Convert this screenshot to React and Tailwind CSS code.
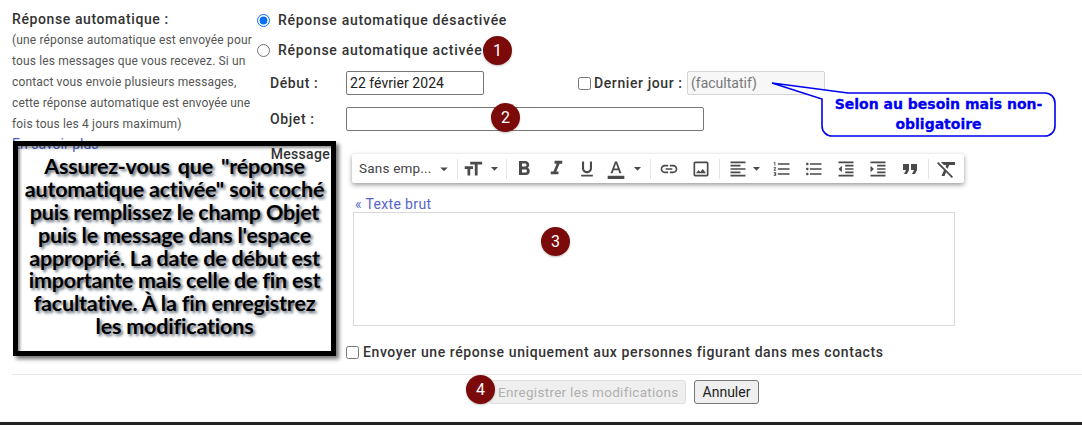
import React from "react";
import {
  MdFormatBold, MdFormatItalic, MdFormatUnderlined, MdFormatColorText, MdInsertLink, MdOutlineImage,
  MdFormatAlignLeft, MdFormatListNumbered, MdFormatListBulleted, MdFormatIndentDecrease, MdFormatIndentIncrease,
  MdFormatQuote, MdFormatClear, MdFormatSize, MdArrowDropDown,
} from "react-icons/md";

const Badge = ({ n, className }) => (
  <div className={`absolute w-[29px] h-[29px] rounded-full bg-[#7b0a0a] text-white text-[16px] flex items-center justify-center shadow-[0_1px_2px_rgba(0,0,0,0.25)] font-['Roboto',sans-serif] ${className}`}>
    {n}
  </div>
);

const Sep = ({ ml }) => <div className="w-px h-[20px] bg-[#e4e4e4] shrink-0" style={{ marginLeft: ml }} />;
const Ico = ({ I, w = 32, s = 20, ml = 0 }) => (
  <div className="flex items-center justify-center shrink-0" style={{ width: w, marginLeft: ml }}>
    <I size={s} color="#4a4a4a" className="shrink-0" />
  </div>
);

export default function App() {
  return (
    <div className="relative w-[1082px] h-[425px] overflow-hidden bg-white font-['Roboto',sans-serif] text-[#222]">
      <div className="flex items-start pt-[5px]">
        <div className="w-[257px] shrink-0 pl-3 pt-[5px]">
          <div className="text-[14px] font-medium tracking-[0.6px] leading-[18px] text-[#333]">Réponse automatique :</div>
          <div className="text-[12px] leading-[21px] text-[#555] tracking-[0.15px] mt-[2px] whitespace-nowrap">
            <div>(une réponse automatique est envoyée pour</div>
            <div>tous les messages que vous recevez. Si un</div>
            <div>contact vous envoie plusieurs messages,</div>
            <div>cette réponse automatique est envoyée une</div>
            <div>fois tous les 4 jours maximum)</div>
          </div>
          <div className="text-[14px] leading-[18px] text-[#4a5fd0]">En savoir plus</div>
        </div>
        <div className="flex-1 min-w-0">
          <label className="flex items-center h-[30px] gap-[8px]">
            <input type="radio" name="r" defaultChecked className="m-0 accent-[#0b6ff5]" />
            <span className="text-[14px] font-medium tracking-[0.7px] text-[#333]">Réponse automatique désactivée</span>
          </label>
          <label className="flex items-center h-[30px] gap-[8px]">
            <input type="radio" name="r" className="m-0" />
            <span className="text-[14px] font-medium tracking-[0.7px] text-[#333]">Réponse automatique activée</span>
          </label>
          <div className="flex items-center h-[24px] mt-[6px] pl-[13px]">
            <div className="w-[76px] text-[14px] font-medium tracking-[0.6px] text-[#333]">Début :</div>
            <input readOnly value="22 février 2024" className="w-[138px] h-[24px] border border-[#767676] rounded-[2px] px-[3px] text-[14px] tracking-[0.05px] text-[#222] outline-none" />
            <input type="checkbox" className="m-0 ml-[94px]" />
            <div className="ml-[3px] w-[93px] text-[14px] font-medium tracking-[0.6px] text-[#333] whitespace-nowrap">Dernier jour :</div>
            <input readOnly value="(facultatif)" className="w-[138px] h-[24px] border border-[#d4d4d4] bg-[#f7f7f7] rounded-[2px] px-[3px] text-[14px] text-[#777] outline-none" />
          </div>
          <div className="flex items-center h-[24px] mt-[12px] pl-[13px]">
            <div className="w-[76px] text-[14px] font-medium tracking-[0.6px] text-[#333]">Objet :</div>
            <input readOnly className="w-[358px] h-[24px] border border-[#767676] rounded-[2px] outline-none" />
          </div>
          <div className="flex items-start mt-[23px]">
            <div className="relative z-10 w-[73px] -mt-[7px] text-right text-[14px] font-medium tracking-[0.3px] text-[#333] leading-[15px]">Message</div>
            <div className="flex flex-col ml-[22px]">
              <div className="flex items-center w-[612px] h-[29px] bg-white pl-[7px] rounded-[2px] shadow-[0_2px_5px_rgba(0,0,0,0.4)]">
                <span className="w-[76px] shrink-0 text-[13.5px] text-[#444] tracking-[0.2px] whitespace-nowrap">Sans emp...</span>
                <Ico I={MdArrowDropDown} w={18} s={18} />
                <Sep ml={4} />
                <Ico I={MdFormatSize} w={30} s={22} />
                <Ico I={MdArrowDropDown} w={12} s={17} />
                <Sep ml={6} />
                <Ico I={MdFormatBold} w={34} s={24} />
                <Ico I={MdFormatItalic} w={30} s={23} />
                <Ico I={MdFormatUnderlined} w={32} s={20} />
                <Ico I={MdFormatColorText} w={26} s={20} />
                <Ico I={MdArrowDropDown} w={16} s={17} />
                <Sep ml={5} />
                <Ico I={MdInsertLink} w={36} s={20} />
                <Ico I={MdOutlineImage} w={28} s={20} />
                <Sep ml={4} />
                <Ico I={MdFormatAlignLeft} w={36} s={20} />
                <Ico I={MdArrowDropDown} w={0} s={17} />
                <Ico I={MdFormatListNumbered} ml={10} />
                <Ico I={MdFormatListBulleted} />
                <Ico I={MdFormatIndentDecrease} />
                <Ico I={MdFormatIndentIncrease} />
                <Ico I={MdFormatQuote} s={24} />
                <Sep ml={2} />
                <Ico I={MdFormatClear} w={36} s={24} />
              </div>
              <div className="text-[14px] leading-[15px] mt-[14px] ml-[3px] tracking-[0.35px] text-[#5566cc]">« Texte brut</div>
              <div className="w-[602px] h-[114px] ml-[1px] border border-[#d9d9d9]" />
            </div>
          </div>
          <div className="flex items-center mt-[18px] ml-[89px] h-[16px]">
            <input type="checkbox" className="m-0" />
            <span className="ml-[4px] text-[14px] font-medium tracking-[0.6px] text-[#333] whitespace-nowrap">Envoyer une réponse uniquement aux personnes figurant dans mes contacts</span>
          </div>
        </div>
      </div>
      <div className="ml-3 mt-[14px] border-t border-[#e8e8e8] flex justify-start pt-[5px] gap-[8px] pl-[477px]">
        <button disabled className="w-[197px] h-[24px] bg-[#efefef] border border-[#dedede] rounded-[3px] text-[13.5px] text-[#b0b0b0] tracking-[0.3px] text-left pl-[8px] whitespace-nowrap">Enregistrer les modifications</button>
        <button className="w-[65px] h-[24px] bg-[#efefef] border border-[#767676] rounded-[3px] text-[14px] text-[#222]">Annuler</button>
      </div>

      <div className="absolute left-[13px] top-[141px] w-[323px] h-[215px] border-[5px] border-black shadow-[3px_3px_4px_rgba(0,0,0,0.55),inset_2px_2px_3px_rgba(0,0,0,0.45)] flex items-center justify-center">
        <div className="w-[313px] text-center font-['Lato',sans-serif] font-bold text-[#000] text-[21.5px] leading-[22.8px] tracking-[-0.2px] whitespace-nowrap [text-shadow:2px_2px_3px_#55606e] pb-[4px]">
          <span className="[word-spacing:3px]">Assurez-vous que "réponse</span><br />
          automatique activée" soit coché<br />
          puis remplissez le champ Objet<br />
          puis le message dans l'espace<br />
          approprié. La date de début est<br />
          importante mais celle de fin est<br />
          facultative. À la fin enregistrez<br />
          les modifications
        </div>
      </div>

      <svg className="absolute left-[750px] top-[75px]" width="320" height="70">
        <path d="M22 8 L98 18 H295 a10 10 0 0 1 10 10 V51 a10 10 0 0 1 -10 10 H82 a10 10 0 0 1 -10 -10 V24 Z" fill="#fff" stroke="#0000ee" strokeWidth="1.6" />
      </svg>
      <div className="absolute left-[823px] top-[94px] w-[231px] text-center font-['DejaVu_Sans',sans-serif] font-bold text-[#0000ee] text-[14px] leading-[20px] [-webkit-text-stroke:0.3px_#0000ee]">
        Selon au besoin mais non-<br />obligatoire
      </div>

      <Badge n="1" className="left-[483px] top-[36px]" />
      <Badge n="2" className="left-[491px] top-[103px]" />
      <Badge n="3" className="left-[541px] top-[227px]" />
      <Badge n="4" className="left-[466px] top-[375px]" />

      <div className="absolute left-0 right-0 bottom-0 h-[3px] bg-[#222]" />
    </div>
  );
}
